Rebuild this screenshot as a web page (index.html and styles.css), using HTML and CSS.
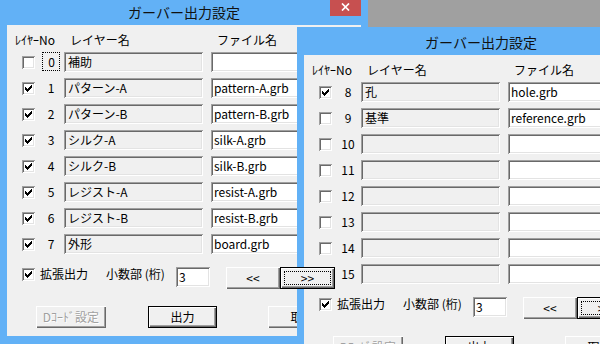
FILE: index.html
```html
<!DOCTYPE html>
<html lang="ja">

<head>
    <meta charset="UTF-8">
    <title>ガーバー出力設定</title>
    <link rel="stylesheet" href="styles.css">
</head>

<body>
    <div class="win w1" id="w1"></div>
    <div class="win w2" id="w2"></div>

    <script>
        const CHK = `<svg width="13" height="13" viewBox="0 0 13 13" shape-rendering="crispEdges"><path d="M3 5h1v3H3zM4 6h1v3H4zM5 7h1v3H5zM6 6h1v3H6zM7 5h1v3H7zM8 4h1v3H8zM9 3h1v3H9z" fill="#000"/></svg>`;
        const XB = `<svg width="9" height="8" viewBox="0 0 9 8"><path d="M1 0.5L8 7.5M8 0.5L1 7.5" stroke="#fff" stroke-width="1.7"/></svg>`;

        const L1 = [
            [0, '補助', '', 0],
            [1, 'パターン-A', 'pattern-A.grb', 1],
            [2, 'パターン-B', 'pattern-B.grb', 1],
            [3, 'シルク-A', 'silk-A.grb', 1],
            [4, 'シルク-B', 'silk-B.grb', 1],
            [5, 'レジスト-A', 'resist-A.grb', 1],
            [6, 'レジスト-B', 'resist-B.grb', 1],
            [7, '外形', 'board.grb', 1]
        ];
        const L2 = [
            [8, '孔', 'hole.grb', 1],
            [9, '基準', 'reference.grb', 0],
            [10, '', '', 0],
            [11, '', '', 0],
            [12, '', '', 0],
            [13, '', '', 0],
            [14, '', '', 0],
            [15, '', '', 0]
        ];

        function cb(on) {
            return `<span class="cb">${on ? CHK : ''}</span>`;
        }

        function row(r) {
            const [no, nm, fn, on] = r;
            const lbl = no === 0 ? `<span class="fcs">${no}</span>` : no;
            return `
                <div class="row">
                    ${cb(on)}
                    <span class="no">${lbl}</span>
                    <span class="fld nm">${nm}</span>
                    <span class="fld fn">${fn}</span>
                </div>`;
        }

        function mk(id, list) {
            document.getElementById(id).innerHTML = `
                <div class="tb">
                    <span class="tt">ガーバー出力設定</span>
                    <span class="cls">${XB}</span>
                </div>
                <div class="cl">
                    <div class="hd">
                        <span class="h-no">ﾚｲﾔｰNo</span>
                        <span class="h-nm">レイヤー名</span>
                        <span>ファイル名</span>
                    </div>
                    <div class="rows">${list.map(row).join('')}</div>
                    <div class="opt">
                        ${cb(1)}
                        <span class="lb">拡張出力</span>
                        <span class="lb2">小数部 (桁)</span>
                        <span class="fld ed">3</span>
                        <span class="btn pv">&lt;&lt;</span>
                        <span class="btn dft nx">&gt;&gt;</span>
                    </div>
                    <div class="act">
                        <span class="btn dcd">Dｺｰﾄﾞ設定</span>
                        <span class="btn dft out">出力</span>
                        <span class="btn cnl">取消</span>
                    </div>
                </div>`;
        }

        mk('w1', L1);
        mk('w2', L2);
    </script>
</body>

</html>
```

FILE: styles.css
```css
body {
    margin: 0;
    width: 600px;
    height: 344px;
    overflow: hidden;
    position: relative;
    background: #a0a0a0;
    font-family: "Noto Sans CJK JP", sans-serif;
    font-size: 12px;
    line-height: 14px;
    color: #000;
}

.win {
    position: absolute;
    width: 368px;
    height: 347px;
    box-sizing: border-box;
    padding: 0 7px 8px;
    background: #62b1f6;
    display: flex;
    flex-direction: column;
}

.w1 {
    left: 0;
    top: -3px;
}

.w2 {
    left: 297px;
    top: 27px;
}

.tb {
    height: 28px;
    position: relative;
    display: flex;
    align-items: center;
    justify-content: center;
    padding-top: 2px;
    box-sizing: border-box;
    font-size: 14px;
    line-height: 18px;
    color: #111;
}

.cls {
    position: absolute;
    top: 0;
    right: 0;
    width: 31px;
    height: 19px;
    background: #c75050;
    display: flex;
    align-items: center;
    justify-content: center;
}

.cls svg {
    display: block;
}

.cl {
    flex: 1;
    position: relative;
    background: #f0f0f0;
}

.hd {
    display: flex;
    height: 14px;
    padding: 8px 0 0 8px;
}

.h-no {
    width: 55px;
}

.h-nm {
    width: 147px;
}

.rows {
    display: flex;
    flex-direction: column;
    gap: 6px;
    margin-top: 5px;
}

.row {
    display: flex;
    align-items: center;
    height: 20px;
}

.cb {
    width: 13px;
    height: 13px;
    flex: none;
    margin-left: 15px;
    background: #fff;
    box-shadow: inset 1px 1px #a0a0a0, inset -1px -1px #fff, inset 2px 2px #696969, inset -2px -2px #e3e3e3;
}

.cb svg {
    display: block;
}

.no {
    width: 24px;
    margin-left: 4px;
    text-align: center;
}

.fcs {
    border: 1px dotted #000;
    padding: 0 4px 0 5px;
}

.fld {
    height: 20px;
    box-sizing: border-box;
    padding: 3px 0 0 4px;
    white-space: nowrap;
    overflow: hidden;
    box-shadow: inset 1px 1px #a0a0a0, inset -1px -1px #fff, inset 2px 2px #696969, inset -2px -2px #e3e3e3;
}

.nm {
    width: 139px;
    margin-left: 1px;
    background: #f0f0f0;
}

.fn {
    width: 136px;
    margin-left: 8px;
    padding-left: 3px;
    background: #fff;
}

.opt {
    display: flex;
    align-items: flex-start;
    height: 22px;
    margin-top: 13px;
}

.opt .cb {
    margin-top: 1px;
}

.lb {
    width: 66px;
    margin-left: 5px;
}

.lb2 {
    width: 70px;
}

.ed {
    width: 34px;
    padding-left: 3px;
    background: #fff;
}

.btn {
    height: 22px;
    box-sizing: border-box;
    display: flex;
    align-items: center;
    justify-content: center;
    background: #f0f0f0;
    box-shadow: inset 1px 1px #fff, inset -1px -1px #696969, inset -2px -2px #a0a0a0;
}

.dft {
    border: 1px solid #000;
}

.pv {
    width: 54px;
    margin-left: 16px;
}

.nx {
    width: 55px;
    position: relative;
}

.nx::after {
    content: "";
    position: absolute;
    top: 3px;
    bottom: 3px;
    left: 3px;
    right: 3px;
    border: 1px dotted #000;
}

/* the focused button of the back window paints over the front one */
.w1 .nx {
    z-index: 1;
}

.act {
    display: flex;
    margin-top: 17px;
    padding-left: 29px;
}

.dcd {
    width: 70px;
    color: #a0a0a0;
    text-shadow: 1px 1px #fff;
}

.out {
    width: 69px;
    margin-left: 42px;
}

.cnl {
    width: 69px;
    margin-left: 51px;
}
```
